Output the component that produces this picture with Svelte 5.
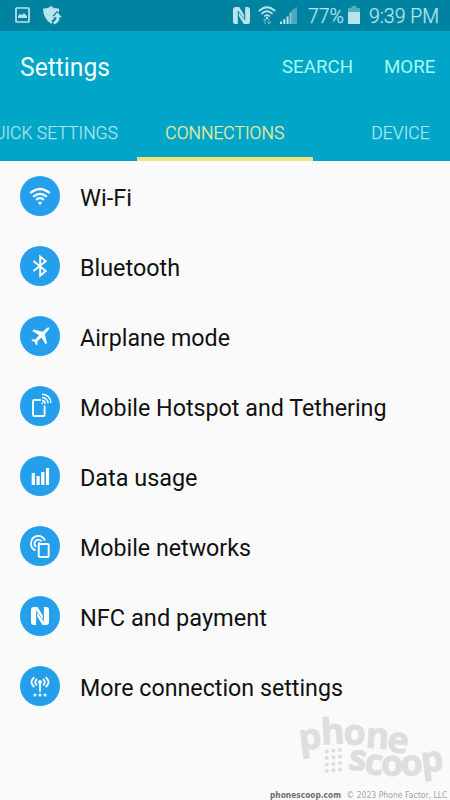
<script>
  const items = [
    ['wifi', 'Wi-Fi', 52],
    ['bluetooth', 'Bluetooth', 100],
    ['airplane', 'Airplane mode', 150],
    ['hotspot', 'Mobile Hotspot and Tethering', 306.5],
    ['data', 'Data usage', 117.5],
    ['networks', 'Mobile networks', 171],
    ['nfc', 'NFC and payment', 187],
    ['more', 'More connection settings', 263]
  ];
</script>

{#snippet nfc()}
  <path d="M3 0h3.6l5.2 8.5v3.8L5.1 3.5V18H3q-3 0-3-3V3q0-3 3-3z" />
  <path d="M15 18h-3.6L6.2 9.5V5.7l6.7 8.8V0H15q3 0 3 3v12q0 3-3 3z" />
{/snippet}

<div class="screen">
  <header>
    <div class="status">
      <svg class="picture" width="15" height="16" viewBox="0 0 15 16">
        <rect x="1" y="1" width="13" height="14" rx=".7" fill="none" stroke="currentColor" stroke-width="1.7" />
        <path fill="currentColor" d="M3 11V9l2-2 2 1 2-2 3 3v2z" />
      </svg>
      <svg class="shield" width="19" height="19" viewBox="0 0 19 19">
        <path fill="currentColor" d="M8 0q3 3 8 2.5v4L14 5 9.2 10.2h2.3q-.4 2.8-3 4.6l1 2-1.5 1Q0 12 0 2.5 5 3 8 0z" />
        <path fill="currentColor" d="m14.3 6.2 4.6 5h-2.4q0 5.4-5.2 7.2l-1.2-2.2q3.3-1.8 3.5-5h-3.3z" />
      </svg>
      <svg class="status-nfc" width="17" height="17" viewBox="0 0 18 18" fill="currentColor">{@render nfc()}</svg>
      <svg class="status-wifi" width="18" height="19" viewBox="0 0 18 19">
        <g fill="none" stroke="currentColor" stroke-width="1.8">
          <path d="M.8 5.2Q9-2.8 17.2 5.2M3.5 7.8q5.5-5 11 0M6.2 10.4q2.8-2.5 5.6 0" />
          <path opacity=".5" stroke-width="1.1" d="M7 18v-4.7M5.2 15 7 13l1.4 1.6M11 13v4.5M9.5 16l1.5 1.8 1.7-1.8" />
        </g>
        <circle cx="9" cy="12" r="1.2" fill="currentColor" />
      </svg>
      <svg class="signal" width="17" height="17" viewBox="0 0 17 17" fill="currentColor">
        <path d="M0 14.5h2V17H0zM3.3 12.2h2V17h-2zM6.6 9.5h2V17h-2z" />
        <path opacity=".75" d="M9.6 5.5h2V17h-2z" /><path opacity=".4" d="M11.6 3.5 17 0v17h-5.4z" />
      </svg>
      <svg class="percent" width="37" height="24"><text x="0" y="19" textLength="36" lengthAdjust="spacingAndGlyphs">77%</text></svg>
      <svg class="battery" width="12" height="18" viewBox="0 0 12 18" fill="currentColor">
        <path opacity=".45" d="M3.5 0h5v2H12v4H0V2h3.5z" /><path d="M0 6h12v12H0z" />
      </svg>
      <svg class="clock" width="72" height="24"><text x="0" y="19" textLength="70" lengthAdjust="spacingAndGlyphs">9:39 PM</text></svg>
    </div>
    <div class="titlebar">
      <svg class="title" width="92" height="36"><text x="0" y="26.5" textLength="90" lengthAdjust="spacingAndGlyphs">Settings</text></svg>
      <svg class="action" width="72" height="36"><text x="0" y="24" textLength="71" lengthAdjust="spacingAndGlyphs">SEARCH</text></svg>
      <svg class="action last" width="53" height="36"><text x="0" y="24" textLength="51.5" lengthAdjust="spacingAndGlyphs">MORE</text></svg>
    </div>
    <nav>
      <div class="tab first"><svg width="137" height="30"><text x="-18" y="21.5" textLength="136" lengthAdjust="spacingAndGlyphs">QUICK SETTINGS</text></svg></div>
      <div class="tab selected"><svg width="120" height="30"><text x="0.3" y="21.5" textLength="119" lengthAdjust="spacingAndGlyphs">CONNECTIONS</text></svg></div>
      <div class="tab device"><svg width="60" height="30"><text x="0.3" y="21.5" textLength="58.5" lengthAdjust="spacingAndGlyphs">DEVICE</text></svg></div>
    </nav>
  </header>
  <main>
    {#each items as [icon, label, width]}
      <div class="row">
        <div class="disc">
          <svg width="40" height="40" viewBox="0 0 40 40" fill="none" stroke="#fff" stroke-width="2">
            {#if icon === 'wifi'}
              <path stroke-width="2.2" d="M10.2 17.2Q20 8.8 29.8 17.2M13.2 20.7q6.8-5.8 13.6 0M16.1 23.8q3.9-3.4 7.8 0" />
              <path fill="#fff" stroke="none" d="M17.7 26.5q2.3-1.7 4.6 0L20 29z" />
            {:else if icon === 'bluetooth'}
              <path stroke-width="1.9" d="m13.5 15 12.2 10-5.5 4.7V10.5l5.5 4.7L13.5 25" />
            {:else if icon === 'airplane'}
              <path fill="#fff" stroke="none" d="M28.1 11.6c1.5-.2 1.4 1.2.4 2.5l-3.6 3.8 2.1 9.4-1.4 1.3-4.2-7-4.2 3.8.3 2.8-1.1 1.2-1.8-3.3-3.3-1.8 1.2-1.1 2.8.3 3.8-4.2-6.8-4.4 1.3-1.4 9.2 2.3 3.6-3.6q.8-.5 1.7-.6z" />
            {:else if icon === 'hotspot'}
              <path stroke-width="1.9" d="M20.8 14h-6.5q-1.3 0-1.3 1.3v13.4q0 1.3 1.3 1.3h9q1.3 0 1.3-1.3v-9.2" />
              <path stroke-width="1.5" d="M22 14.6q3 .2 3.2 3.2M22 11.4q5.7.4 6.1 6M22 8.2q8.5.6 8.9 8.7" />
              <circle cx="22.4" cy="17.3" r="1" fill="#fff" stroke="none" />
            {:else if icon === 'data'}
              <path stroke-width="3.2" d="M13.3 29V17M18.1 29v-9M22.8 29V16M27.5 29V12" />
            {:else if icon === 'networks'}
              <rect x="18.7" y="18" width="10" height="13" rx="1.2" />
              <path stroke-width="1.8" d="M15.5 24.5C8.5 21.5 10 11 17.5 10q5-.5 7.5 4.5M15.9 20.8q-2.5-2.5-.8-5.3 3.2-3.8 6.7-.2M18.2 18l1.7-1.3" />
            {:else if icon === 'nfc'}
              <g transform="translate(11 11)" fill="#fff" stroke="none">{@render nfc()}</g>
            {:else}
              <path stroke-width="1.8" d="M14.3 11.2q-5.8 4.8 0 10M25.7 11.2q5.8 4.8 0 10M17 13q-3.6 3.1 0 6.3M23 13q3.6 3.1 0 6.3M20 16v9.8" />
              <g fill="#fff" stroke="none"><circle cx="20" cy="16" r="2" /><circle cx="15" cy="29" r="1.5" /><circle cx="20" cy="29" r="1.5" /><circle cx="25" cy="29" r="1.5" /></g>
            {/if}
          </svg>
        </div>
        <svg class="label" width="320" height="40"><text x="0" y="29.5" textLength={width} lengthAdjust="spacingAndGlyphs">{label}</text></svg>
      </div>
    {/each}
  </main>
  <footer>
    <svg class="logo" width="150" height="68" viewBox="0 0 150 68">
      <text x="1 22.5 44.5 66 87" y="34.5 28.8 29 31.5 35" rotate="-7 -3 0 4 8">phone</text>
      <text x="48.5 65 82 102 123" y="53 58 60 60 57" rotate="8 4 0 -3 -7">scoop</text>
      {#each [0, 1, 2, 3] as y}{#each [0, 1, 2] as x}
        <circle cx={27.8 + x * 6.5} cy={35.5 + y * 6.5 - x * .7} r="2.1" />
      {/each}{/each}
    </svg>
    <svg class="credit" width="180" height="12">
      <text class="site" x="0" y="9" textLength="71" lengthAdjust="spacingAndGlyphs">phonescoop.com</text>
      <text x="76.5" y="9" textLength="101" lengthAdjust="spacingAndGlyphs">© 2023 Phone Factor, LLC</text>
    </svg>
  </footer>
</div>

<style>
  .screen { width: 450px; height: 800px; display: flex; flex-direction: column; overflow: hidden; background: #fafafa; font-family: Roboto, sans-serif; }
  svg { display: block; flex: none; overflow: visible; }
  text { fill: currentColor; }
  header { height: 161px; flex: none; background: #00a5c7; }
  .status { height: 31px; display: flex; background: #0083a0; color: #b9e3ec; font-size: 20px; }
  .picture { margin: 7px 0 0 15px; }
  .shield { margin: 6px 0 0 13px; }
  .status-nfc { margin: 7px 0 0 171px; }
  .status-wifi { margin: 6px 0 0 8px; }
  .signal { margin: 7px 0 0 4px; }
  .percent { margin: 4px 0 0 11px; }
  .battery { margin: 6px 0 0 3px; }
  .clock { margin: 4px 0 0 9px; }
  .titlebar { height: 72px; display: flex; align-items: center; }
  .title { margin-left: 20px; color: #f3ffff; font-size: 25px; }
  .action { margin-left: 170px; color: #a2fbf4; font-size: 19px; }
  .action.last { margin-left: 29.5px; }
  nav { height: 58px; display: flex; color: #a8e6ef; font-size: 18px; }
  .tab { box-sizing: border-box; padding-top: 14px; height: 58px; }
  .first { width: 137px; overflow: hidden; }
  .selected { width: 176px; padding-left: 28px; color: #eeed9b; border-bottom: 4px solid #f3e37e; }
  .device { width: 137px; padding-left: 58px; }
  .status text, nav text { font-weight: 300; stroke: currentColor; stroke-width: .25px; }
  main { height: 560px; flex: none; }
  .row { height: 70px; display: flex; align-items: center; gap: 20px; padding-left: 20px; }
  .disc { width: 40px; height: 40px; border-radius: 50%; background: #239fec; }
  .label { color: #111; font-size: 24px; }
  footer { flex: 1; display: flex; flex-direction: column; }
  .logo { margin: -5px 0 0 299px; color: #dedede; fill: #dedede; font: 700 36px "Open Sans", sans-serif; }
  .logo text { stroke: #dedede; stroke-width: .8px; }
  .credit { margin: 5px 0 0 270px; color: #a4a4a4; font: 8px "DejaVu Sans", sans-serif; }
  .site { color: #707070; font-weight: bold; }
</style>
